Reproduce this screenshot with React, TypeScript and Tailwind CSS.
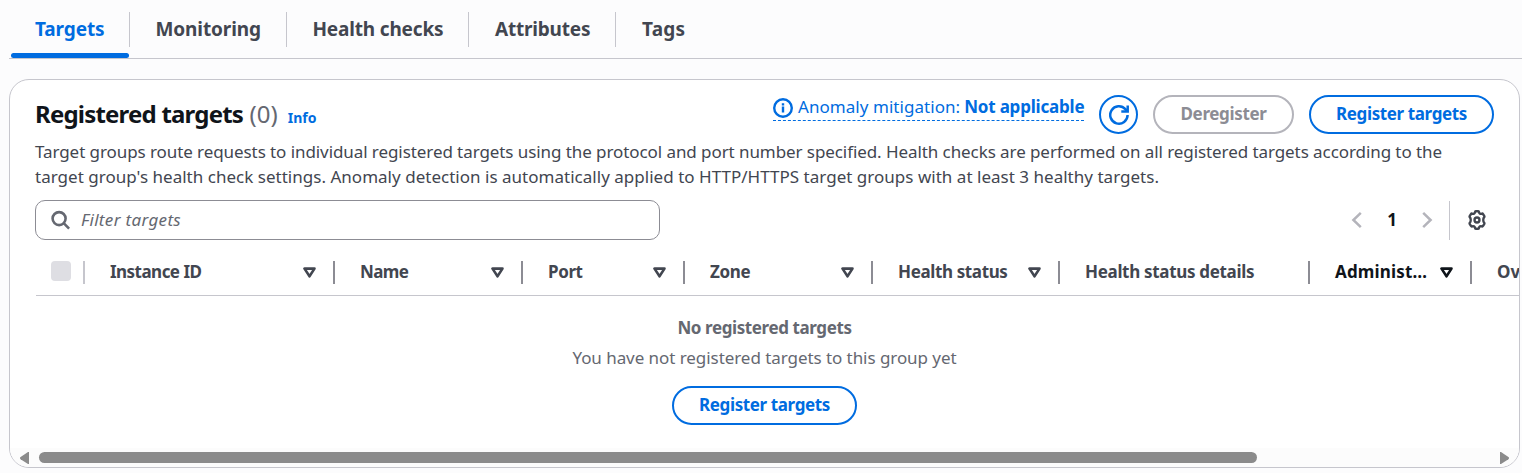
const tabs = [
  { label: "Targets", box: "w-[119px] pl-[24px]", text: "tracking-[-0.1px]" },
  { label: "Monitoring", box: "w-[157px] pl-[25.5px]", text: "tracking-[-0.1px]" },
  { label: "Health checks", box: "w-[182px] pl-[25.5px]", text: "tracking-[-0.17px]" },
  { label: "Attributes", box: "w-[147px] pl-[26px]", text: "tracking-[-0.2px]" },
  { label: "Tags", box: "w-[100px] pl-[26px]", text: "tracking-[0.2px]" },
];

const columns = [
  { label: "Instance ID", width: "w-[250px]", text: "tracking-[-0.53px]", sort: true },
  { label: "Name", width: "w-[188px]", text: "tracking-[-0.6px]", sort: true },
  { label: "Port", width: "w-[162px]", text: "tracking-[-0.4px]", sort: true },
  { label: "Zone", width: "w-[188px]", text: "tracking-[-0.3px]", sort: true },
  { label: "Health status", width: "w-[187px]", text: "tracking-[-0.37px]", sort: true },
  { label: "Health status details", width: "w-[250px]", text: "tracking-[-0.32px]", sort: false },
  { label: "Administ…", width: "w-[162px]", text: "tracking-[0.15px]", sort: true, active: true },
  { label: "Override", width: "w-[188px]", text: "", sort: false },
];

function InfoIcon() {
  return (
    <svg className="h-5 w-5 shrink-0" viewBox="0 0 20 20" fill="none" stroke="currentColor">
      <circle cx="10" cy="10" r="8.8" strokeWidth="2.4" />
      <path d="M10 8.6v6M10 5.2v2.2" strokeWidth="2.4" />
    </svg>
  );
}

function RefreshIcon() {
  return (
    <svg className="h-5 w-5" viewBox="0 0 20 20" fill="none" stroke="currentColor" strokeWidth="2.5">
      <path d="M18.6 10a8.7 8.7 0 1 1-2.2-5.8l1.6 1.8" />
      <path d="M18.700 0.400v6.200h-6.400" />
    </svg>
  );
}

function SearchIcon() {
  return (
    <svg className="h-5 w-5" viewBox="0 0 20 20" fill="none" stroke="#656871" strokeWidth="2.6">
      <circle cx="8.100" cy="8.600" r="6.500" />
      <path d="M12.700 13.200l5.400 5.400" />
    </svg>
  );
}

function GearIcon() {
  return (
    <svg className="h-[22px] w-[22px]" viewBox="0 0 24 24" fill="none" stroke="#424650" strokeWidth="2.6" strokeLinejoin="round">
      <path d="M10.700 2.400h2.600q.8 0 .9.900c.2 1.600 1.700 2.400 3.100 1.800q.8-.4 1.300.4l1.400 2.300q.4.700-.2 1.200c-1.300 1.100-1.300 4.900 0 6q.6.500.2 1.200l-1.400 2.300q-.5.800-1.300.4c-1.400-.6-2.900.2-3.100 1.800q-.1.900-.9.900h-2.600q-.8 0-.9-.9c-.2-1.600-1.700-2.400-3.100-1.800q-.8.400-1.300-.4L4 16.200q-.4-.7.2-1.200c1.300-1.100 1.300-4.900 0-6q-.6-.5-.2-1.200l1.400-2.300q.5-.8 1.300-.4c1.400.6 2.900-.2 3.100-1.800q.1-.9.900-.9z" />
      <circle cx="12" cy="12" r="2.700" />
    </svg>
  );
}

function Chevron({ right = false }: { right?: boolean }) {
  return (
    <svg className="h-4 w-[11px]" viewBox="0 0 11 16" fill="none" stroke="#b4b4bb" strokeWidth="2.5">
      <path d={right ? "M1.2 0.9L8.600 8l-7.400 7.100" : "M9.800 0.900L2.400 8l7.400 7.100"} />
    </svg>
  );
}

function SortIcon() {
  return (
    <svg className="h-[11px] w-[13px]" viewBox="0 0 13 11" fill="none" stroke="currentColor" strokeWidth="2.6" strokeLinejoin="round">
      <path d="M1.500 1.600h10L6.500 9.300z" />
    </svg>
  );
}

function RegisterButton() {
  return (
    <button className="flex h-[39px] w-[185px] items-center justify-center rounded-full border-2 border-[#006ce0] pb-[2px] text-[17px] font-bold tracking-[-0.38px] text-[#006ce0]">
      Register targets
    </button>
  );
}

export default function App() {
  return (
    <div className="h-[473px] w-full overflow-hidden bg-[#fcfcfd] font-['Noto_Sans',sans-serif] text-[17px] text-[#424650]">
      <nav className="ml-[9px] flex h-[59px] border-b border-[#c6c6cd] pl-[2px]">
        {tabs.map((tab, i) => (
          <div key={tab.label} className={`relative flex shrink-0 pt-3 ${tab.box}`}>
            <span
              className={`pt-[4px] text-[19px] leading-[26px] font-bold whitespace-nowrap ${tab.text} ${i === 0 ? "text-[#006ce0]" : ""}`}
            >
              {tab.label}
            </span>
            {i < tabs.length - 1 && <span className="ml-auto h-[35px] w-px bg-[#c6c6cd]" />}
            {i === 0 && <span className="absolute bottom-0 left-0 h-[5px] w-[118px] rounded-full bg-[#006ce0]" />}
          </div>
        ))}
      </nav>

      <section className="mt-5 ml-[9px] flex h-[389px] w-[1511px] flex-col overflow-hidden rounded-[20px] border border-[#c6c6cd] bg-white">
        <header className="flex h-[59px] shrink-0 items-start justify-between pt-[15px] pr-[25px] pl-[25px]">
          <div className="flex items-baseline pt-[1px] whitespace-nowrap">
            <h2 className="text-[24px] leading-[36px] font-bold tracking-[-0.8px] text-[#0f141a]">Registered targets</h2>
            <span className="ml-[6.5px] text-[24px] text-[#656871]">(0)</span>
            <a className="ml-[10px] text-[14px] font-bold tracking-[0px] text-[#006ce0]">Info</a>
          </div>
          <div className="flex gap-[15px] text-[#006ce0]">
            <div className="mt-px flex h-[25px] w-[311px] items-center border-b border-dashed border-[#006ce0] whitespace-nowrap">
              <InfoIcon />
              <span className="ml-[5px] pb-[3px] tracking-[0.05px]">Anomaly mitigation:</span>
              <span className="ml-[4px] pb-[3px] font-bold tracking-[-0.2px]">Not applicable</span>
            </div>
            <button className="flex h-[39px] w-[39px] items-center justify-center rounded-full border-2 border-[#006ce0]">
              <RefreshIcon />
            </button>
            <button className="flex h-[39px] w-[141px] items-center justify-center rounded-full border-2 border-[#b4b4bb] pb-[2px] font-bold tracking-[-0.35px] text-[#8c8c94]">
              Deregister
            </button>
            <RegisterButton />
          </div>
        </header>

        <div className="pl-[25px] leading-[25px] whitespace-nowrap">
          <p className="tracking-[-0.078px]">
            Target groups route requests to individual registered targets using the protocol and port number specified. Health checks are performed on all registered targets according to the
          </p>
          <p className="tracking-[0.02px]">
            target group's health check settings. Anomaly detection is automatically applied to HTTP/HTTPS target groups with at least 3 healthy targets.
          </p>
        </div>

        <div className="mt-[11px] flex h-10 shrink-0 items-center pl-[25px]">
          <div className="flex h-10 w-[625px] items-center rounded-[10px] border border-[#8c8c94] pl-[15px] text-[#656871]">
            <SearchIcon />
            <span className="ml-[10px] pb-px tracking-[0.33px] italic">Filter targets</span>
          </div>
          <div className="ml-[691px] flex items-center">
            <Chevron />
            <span className="w-[60px] pb-px text-center font-bold text-[#0f141a]">1</span>
            <Chevron right />
            <span className="mr-[16px] ml-[16px] h-[39px] w-px bg-[#c6c6cd]" />
            <GearIcon />
          </div>
        </div>

        <div className="mt-[6px] ml-[26px] flex h-[50px] shrink-0 border-b border-[#c6c6cd] pt-[15px]">
          <div className="flex w-[49px] shrink-0 justify-between pl-[15px]">
            <span className="h-5 w-5 rounded-[4px] bg-[#dedee3]" />
            <span className="h-[23px] w-[2px] bg-[#c6c6cd]" />
          </div>
          {columns.map((c) => (
            <div key={c.label} className={`flex h-[23px] shrink-0 items-center pl-[25px] ${c.width} ${c.active ? "text-[#0f141a]" : ""}`}>
              <span className={`pb-[1px] font-bold whitespace-nowrap ${c.text}`}>{c.label}</span>
              <span className="mr-[17px] ml-auto">{c.sort && <SortIcon />}</span>
              <span className="h-[23px] w-[2px] bg-[#8c8c94]" />
            </div>
          ))}
        </div>

        <div className="flex flex-1 flex-col items-center text-[#656871]">
          <div className="mt-[19px] leading-[25px] font-bold tracking-[-0.4px]">No registered targets</div>
          <div className="mt-[5px] mb-[16px] leading-[25px] tracking-[-0.06px]">You have not registered targets to this group yet</div>
          <RegisterButton />
        </div>

        <div className="flex h-[19px] shrink-0 items-start bg-[#fcfcfc] pt-1 pl-[10px]">
          <svg className="h-3 w-[9px]" viewBox="0 0 9 12" fill="#8b8b8b">
            <path d="M8 0h1v12H8L0.600 7.200a1.400 1.400 0 0 1 0-2.200z" />
          </svg>
          <span className="ml-[10px] h-[11px] w-[1218px] rounded-full bg-[#8b8b8b]" />
          <svg className="ml-[243px] h-3 w-[9px]" viewBox="0 0 9 12" fill="#8b8b8b">
            <path d="M1 0H0v12h1l7.400-4.800a1.400 1.400 0 0 0 0-2.200z" />
          </svg>
        </div>
      </section>
    </div>
  );
}
